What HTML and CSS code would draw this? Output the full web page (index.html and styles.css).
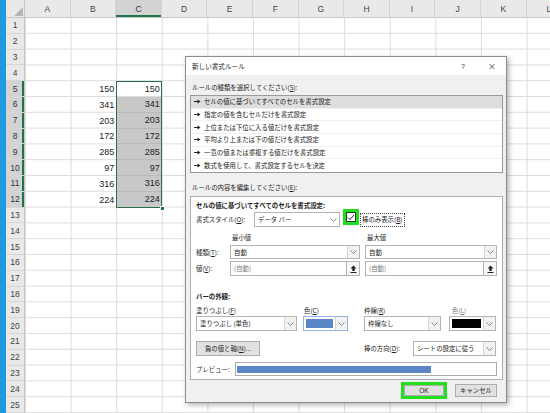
FILE: index.html
```html
<!DOCTYPE html>
<html lang="ja">
<head>
<meta charset="utf-8">
<title>新しい書式ルール</title>
<link rel="stylesheet" href="styles.css">
</head>
<body>
<div class="app">
  <div class="strip"></div>
  <div class="sheet">
    <div class="colhdr">
      <div class="corner"><svg width="9" height="9" viewBox="0 0 9 9"><polygon points="9,0 9,9 0,9" fill="#b5b5b5"/></svg></div>
      <div class="ch">A</div><div class="ch">B</div><div class="ch cur">C</div><div class="ch">D</div>
      <div class="ch">E</div><div class="ch">F</div><div class="ch">G</div><div class="ch">H</div>
      <div class="ch">I</div><div class="ch">J</div><div class="ch">K</div><div class="ch">L</div>
    </div>
    <div class="sheetbody">
      <div class="rowhdr">
        <div class="rh">1</div><div class="rh">2</div><div class="rh">3</div><div class="rh">4</div>
        <div class="rh cur">5</div><div class="rh cur">6</div><div class="rh cur">7</div><div class="rh cur">8</div>
        <div class="rh cur">9</div><div class="rh cur">10</div><div class="rh cur">11</div><div class="rh cur">12</div>
        <div class="rh">13</div><div class="rh">14</div><div class="rh">15</div><div class="rh">16</div>
        <div class="rh">17</div><div class="rh">18</div><div class="rh">19</div><div class="rh">20</div>
        <div class="rh">21</div><div class="rh">22</div><div class="rh">23</div><div class="rh">24</div>
        <div class="rh">25</div>
      </div>
      <div class="cells">
        <div class="data">
          <div class="dcol"></div>
          <div class="dcol">
            <div class="num">150</div><div class="num">341</div><div class="num">203</div><div class="num">172</div>
            <div class="num">285</div><div class="num">97</div><div class="num">316</div><div class="num">224</div>
          </div>
          <div class="dcol selcol">
            <div class="num active">150</div><div class="num">341</div><div class="num">203</div><div class="num">172</div>
            <div class="num">285</div><div class="num">97</div><div class="num">316</div><div class="num">224</div>
            <span class="handle"></span>
          </div>
        </div>
      </div>
    </div>
  </div>
</div>

<div class="dialog">
  <div class="titlebar">
    <span class="title">新しい書式ルール</span>
    <span class="help">?</span>
    <span class="close">×</span>
  </div>
  <div class="dbody">
    <div class="lbl">ルールの種類を選択してください(<u>S</u>):</div>
    <div class="list">
      <div class="item on"><svg class="arw" width="7" height="5" viewBox="0 0 7 5"><path d="M0 2.5H4" stroke="#222" stroke-width="1"/><path d="M3.5 0.5L6.5 2.5L3.5 4.5Z" fill="#222"/></svg>セルの値に基づいてすべてのセルを書式設定</div>
      <div class="item"><svg class="arw" width="7" height="5" viewBox="0 0 7 5"><path d="M0 2.5H4" stroke="#222" stroke-width="1"/><path d="M3.5 0.5L6.5 2.5L3.5 4.5Z" fill="#222"/></svg>指定の値を含むセルだけを書式設定</div>
      <div class="item"><svg class="arw" width="7" height="5" viewBox="0 0 7 5"><path d="M0 2.5H4" stroke="#222" stroke-width="1"/><path d="M3.5 0.5L6.5 2.5L3.5 4.5Z" fill="#222"/></svg>上位または下位に入る値だけを書式設定</div>
      <div class="item"><svg class="arw" width="7" height="5" viewBox="0 0 7 5"><path d="M0 2.5H4" stroke="#222" stroke-width="1"/><path d="M3.5 0.5L6.5 2.5L3.5 4.5Z" fill="#222"/></svg>平均より上または下の値だけを書式設定</div>
      <div class="item"><svg class="arw" width="7" height="5" viewBox="0 0 7 5"><path d="M0 2.5H4" stroke="#222" stroke-width="1"/><path d="M3.5 0.5L6.5 2.5L3.5 4.5Z" fill="#222"/></svg>一意の値または重複する値だけを書式設定</div>
      <div class="item"><svg class="arw" width="7" height="5" viewBox="0 0 7 5"><path d="M0 2.5H4" stroke="#222" stroke-width="1"/><path d="M3.5 0.5L6.5 2.5L3.5 4.5Z" fill="#222"/></svg>数式を使用して、書式設定するセルを決定</div>
    </div>
    <div class="lbl lbl2">ルールの内容を編集してください(<u>E</u>):</div>
    <div class="panel">
      <div class="ph">セルの値に基づいてすべてのセルを書式設定:</div>
      <div class="row r-style">
        <span class="fl w58">書式スタイル(<u>O</u>):</span>
        <div class="sel w86"><span class="val">データ バー</span><span class="arr"><svg width="7" height="4" viewBox="0 0 7 4"><polyline points="0.5,0.5 3.5,3.5 6.5,0.5" fill="none" stroke="#777" stroke-width="0.9"/></svg></span></div>
        <div class="hl"><span class="cb"><svg width="8" height="7" viewBox="0 0 8 7"><polyline points="1,3.5 3,5.5 7,1" fill="none" stroke="#222" stroke-width="1"/></svg></span></div>
        <span class="focus">棒のみ表示(<u>B</u>)</span>
      </div>
      <div class="row r-mm">
        <span class="w34"></span>
        <span class="mm w135">最小値</span>
        <span class="mm">最大値</span>
      </div>
      <div class="row r-type">
        <span class="fl w34">種類(<u>T</u>):</span>
        <div class="sel w130"><span class="val">自動</span><span class="arr boxed"><svg width="7" height="4" viewBox="0 0 7 4"><polyline points="0.5,0.5 3.5,3.5 6.5,0.5" fill="none" stroke="#777" stroke-width="0.9"/></svg></span></div>
        <div class="sel w132 ml5"><span class="val">自動</span><span class="arr boxed"><svg width="7" height="4" viewBox="0 0 7 4"><polyline points="0.5,0.5 3.5,3.5 6.5,0.5" fill="none" stroke="#777" stroke-width="0.9"/></svg></span></div>
      </div>
      <div class="row r-val">
        <span class="fl w34">値(<u>V</u>):</span>
        <div class="sel w130"><span class="val dim">(自動)</span><span class="up"><svg width="7" height="8" viewBox="0 0 7 8"><path d="M3.5 0.5L0.5 3.5H2.3V6H4.7V3.5H6.5Z" fill="#222"/><path d="M0.5 7.5H6.5" stroke="#222" stroke-width="1"/></svg></span></div>
        <div class="sel w132 ml5"><span class="val dim">(自動)</span><span class="up"><svg width="7" height="8" viewBox="0 0 7 8"><path d="M3.5 0.5L0.5 3.5H2.3V6H4.7V3.5H6.5Z" fill="#222"/><path d="M0.5 7.5H6.5" stroke="#222" stroke-width="1"/></svg></span></div>
      </div>
      <div class="ph ph2">バーの外観:</div>
      <div class="row r-blbl">
        <span class="w108">塗りつぶし(<u>F</u>)</span>
        <span class="w60">色(<u>C</u>)</span>
        <span class="w88">枠線(<u>R</u>)</span>
        <span class="dim">色(<u>L</u>)</span>
      </div>
      <div class="row r-bsel">
        <div class="sel w101"><span class="val">塗りつぶし (単色)</span><span class="arr boxed"><svg width="7" height="4" viewBox="0 0 7 4"><polyline points="0.5,0.5 3.5,3.5 6.5,0.5" fill="none" stroke="#777" stroke-width="0.9"/></svg></span></div>
        <div class="csel w45 ml6 focusc"><span class="sw blue"></span><span class="arr boxed"><svg width="7" height="4" viewBox="0 0 7 4"><polyline points="0.5,0.5 3.5,3.5 6.5,0.5" fill="none" stroke="#777" stroke-width="0.9"/></svg></span></div>
        <div class="sel w77 ml16"><span class="val">枠線なし</span><span class="arr boxed"><svg width="7" height="4" viewBox="0 0 7 4"><polyline points="0.5,0.5 3.5,3.5 6.5,0.5" fill="none" stroke="#777" stroke-width="0.9"/></svg></span></div>
        <div class="csel w47 ml8"><span class="sw black"></span><span class="arr boxed"><svg width="7" height="4" viewBox="0 0 7 4"><polyline points="0.5,0.5 3.5,3.5 6.5,0.5" fill="none" stroke="#777" stroke-width="0.9"/></svg></span></div>
      </div>
      <div class="row r-neg">
        <span class="btn neg">負の値と軸(<u>N</u>)...</span>
        <span class="dirlbl">棒の方向(<u>D</u>):</span>
        <div class="sel w83"><span class="val">シートの設定に従う</span><span class="arr boxed"><svg width="7" height="4" viewBox="0 0 7 4"><polyline points="0.5,0.5 3.5,3.5 6.5,0.5" fill="none" stroke="#777" stroke-width="0.9"/></svg></span></div>
      </div>
      <div class="row r-prev">
        <span class="prevlbl">プレビュー:</span>
        <div class="prev"><div class="bar"></div></div>
      </div>
    </div>
    <div class="foot">
      <div class="okwrap"><span class="btn ok">OK</span></div>
      <span class="btn cancel">キャンセル</span>
    </div>
  </div>
</div>
</body>
</html>
```
FILE: styles.css
```css
* { box-sizing: border-box; margin: 0; padding: 0; }
html, body { width: 550px; height: 413px; overflow: hidden; background: #fff; }
body {
  position: relative;
  font-family: "Liberation Sans", "Noto Sans CJK JP", sans-serif;
  color: #222;
}

/* ---------- spreadsheet ---------- */
.app { display: flex; height: 413px; }
.strip { width: 6px; flex: none; background: #1e9be0; }
.sheet { flex: 1; display: flex; flex-direction: column; overflow: hidden; }
.colhdr {
  display: flex; height: 18px; flex: none;
  background: #e9e9e9; border-bottom: 1px solid #c8c8c8;
}
.corner {
  width: 19px; flex: none; border-right: 1px solid #c8c8c8;
  display: flex; align-items: flex-end; justify-content: flex-end; padding: 0 1px 1px 0;
}
.ch {
  width: 45.6px; flex: none; border-right: 1px solid #d4d4d4;
  display: flex; align-items: center; justify-content: center;
  font-size: 8.5px; color: #444;
}
.ch.cur { background: #d3d3d3; box-shadow: inset 0 -2px 0 #217346; color: #333; }
.sheetbody { flex: 1; display: flex; }
.rowhdr { width: 19px; flex: none; background: #e9e9e9; border-right: 1px solid #c8c8c8; }
.rh {
  height: 15.8px; display: flex; align-items: center; justify-content: center;
  font-size: 8.5px; color: #444; border-bottom: 1px solid #d6d6d6;
}
.rh.cur { background: #d3d3d3; box-shadow: inset -2px 0 0 #217346; color: #333; }
.cells {
  flex: 1;
  background-color: #fff;
  background-image:
    linear-gradient(to right, #dcdcdc 1px, transparent 1px),
    linear-gradient(to bottom, transparent 14.8px, #dcdcdc 14.8px);
  background-size: 45.6px 15.8px;
  padding-top: 63.2px;
}
.data { display: flex; }
.dcol { width: 45.6px; flex: none; display: flex; flex-direction: column; }
.num {
  height: 15.8px; display: flex; align-items: center; justify-content: flex-end;
  padding-right: 2px; font-size: 9px; color: #222;
}
.selcol {
  position: relative; background: #c8c8c8;
  outline: 1.5px solid #2e6d4a; outline-offset: -1px;
}
.selcol .num { border-bottom: 1px solid #b9b9b9; }
.selcol .num.active { background: #fff; border-bottom-color: #dcdcdc; }
.handle {
  position: absolute; right: -3px; bottom: -3px; width: 5px; height: 5px;
  background: #217346; border: 1px solid #fff;
}

/* ---------- dialog ---------- */
.dialog {
  position: absolute; left: 185px; top: 56px; width: 322px; height: 347px;
  border: 1px solid #8c8c8c; background: #f0f0f0;
  box-shadow: 2px 2px 5px rgba(0,0,0,0.3);
  font-family: "Noto Sans CJK JP", "Liberation Sans", sans-serif;
  font-size: 6.4px; color: #222;
  display: flex; flex-direction: column;
}
.titlebar {
  height: 18px; flex: none; background: #fff;
  display: flex; align-items: center; padding-left: 6px;
}
.title { flex: 1; font-size: 6.6px; }
.help { width: 10px; text-align: center; font-size: 7px; margin-right: 18px; font-family: "Liberation Sans", sans-serif; }
.close { width: 12px; text-align: center; font-size: 10px; margin-right: 8px; color: #333; font-family: "DejaVu Sans", sans-serif; font-weight: 300; }
.dbody { flex: 1; display: flex; flex-direction: column; padding: 0 3px 0 4px; }
u { text-decoration: underline; text-underline-offset: 1px; }
.lbl { margin-top: 6px; height: 14px; line-height: 14px; padding-left: 2px; }
.lbl2 { margin-top: 8px; }
.list {
  height: 78px; background: #fff; border: 1px solid #9a9a9a;
  display: flex; flex-direction: column;
}
.item {
  height: 12.67px; display: flex; align-items: center; padding-left: 3px;
  border-bottom: 1px solid #f0f0f0;
}
.item:last-child { border-bottom: none; }
.item.on { background: #dedede; }
.arw { margin-right: 3px; flex: none; }

.panel {
  margin-top: 1px; height: 184px; background: #fff; border: 1px solid #acacac;
  padding: 3px 5px 0 5px;
  display: flex; flex-direction: column;
}
.ph { height: 12px; line-height: 12px; font-weight: bold; }
.ph2 { margin-top: 15px; }
.row { display: flex; align-items: center; flex: none; }
.r-style { height: 15px; }
.r-mm { margin-top: 4px; height: 12px; }
.r-type { margin-top: 2px; height: 14px; }
.r-val { margin-top: 2px; height: 15px; }
.r-blbl { margin-top: 1px; height: 12px; }
.r-bsel { height: 15px; }
.r-neg { margin-top: 10px; height: 15px; }
.r-prev { margin-top: 6px; height: 14px; }

.w34 { width: 34px; flex: none; }
.w58 { width: 58px; flex: none; }
.w60 { width: 60px; flex: none; }
.w86 { width: 86px; flex: none; }
.w88 { width: 88px; flex: none; }
.w108 { width: 108px; flex: none; }
.w130 { width: 130px; flex: none; }
.w132 { width: 132px; flex: none; }
.w135 { width: 135px; flex: none; }
.w101 { width: 101px; flex: none; }
.w45 { width: 45px; flex: none; }
.w47 { width: 47px; flex: none; }
.w77 { width: 77px; flex: none; }
.w83 { width: 83px; flex: none; }
.ml5 { margin-left: 5px; }
.ml6 { margin-left: 6px; }
.ml8 { margin-left: 8px; }
.ml16 { margin-left: 16px; }
.mm { padding-left: 2px; }
.dim { color: #777; }

.sel {
  height: 100%; display: flex; align-items: stretch;
  background: #fff; border: 1px solid #b4b4b4;
}
.sel .val { flex: 1; display: flex; align-items: center; padding-left: 3px; white-space: nowrap; overflow: hidden; }
.arr { width: 12px; flex: none; display: flex; align-items: center; justify-content: center; }
.arr.boxed { background: #f2f2f2; border-left: 1px solid #d6d6d6; }
.up {
  width: 13px; flex: none; display: flex; align-items: center; justify-content: center;
  background: #f7f7f7; border-left: 1px solid #b4b4b4;
}
.hl {
  margin-left: 3px; width: 16px; height: 16px; align-self: flex-start; margin-top: -3px;
  background: #22e01e; display: flex; align-items: center; justify-content: center; flex: none;
}
.cb {
  width: 10px; height: 10px; background: #fff; border: 1px solid #333;
  display: flex; align-items: center; justify-content: center;
}
.focus { margin-left: 1px; border: 1px dotted #444; padding: 1px 1px; line-height: 10px; }

.csel {
  height: 100%; display: flex; align-items: stretch;
  background: #fff; border: 1px solid #b4b4b4;
}
.csel.focusc { border-color: #8fb5e0; }
.sw { flex: 1; margin: 2px; }
.sw.blue { background: #5b87c9; }
.sw.black { background: #000; }

.btn {
  display: flex; align-items: center; justify-content: center;
  background: #e1e1e1; border: 1px solid #adadad; height: 100%;
}
.neg { width: 64px; flex: none; }
.dirlbl { margin-left: 104px; width: 49px; flex: none; }
.prevlbl { width: 39px; flex: none; }
.prev {
  width: 262px; height: 100%; border: 1px solid #acacac; background: #fff;
  display: flex; align-items: center; padding: 0 1px;
}
.bar { width: 194px; height: 7px; background: #5b87c9; }

.foot {
  margin-top: 2px; height: 17px; display: flex; justify-content: flex-end; align-items: center;
  padding-right: 6px;
}
.okwrap { width: 46px; height: 17px; border: 3px solid #22e01e; background: #e1e1e1; display: flex; }
.ok { width: 100%; border: 1px solid #adadad; font-family: "Liberation Sans", sans-serif; font-size: 6.6px; }
.cancel { margin-left: 8px; width: 42px; height: 13px; }
```
